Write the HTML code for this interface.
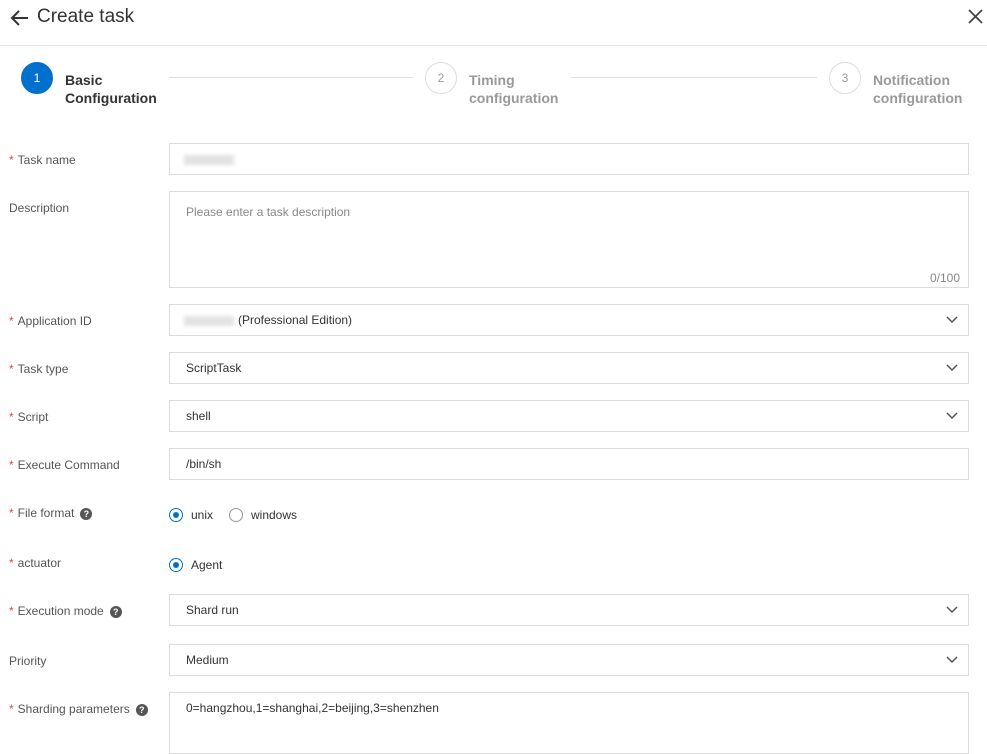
<!DOCTYPE html><html><head><style>
body{margin:0;width:987px;height:735px;overflow:hidden;background:#fff;font-family:"Liberation Sans",sans-serif;position:relative;color:#333}
.a{position:absolute}
.lbl{position:absolute;left:9px;font-size:12px;color:#555}
.lbl b{color:#e54545;font-weight:normal;margin-right:4px}
.in{position:absolute;left:169px;width:798px;height:30px;border:1px solid #dcdcdc;font-size:12px;color:#333;line-height:31px;text-indent:16px}
.chev{position:absolute;right:10px;top:11px}
.q{display:inline-block;width:12px;height:12px;border-radius:50%;background:#555;color:#fff;font-size:9px;font-weight:bold;text-align:center;line-height:12px;vertical-align:middle;margin-left:6px}
.rad{position:absolute;width:14px;height:14px;border-radius:50%;border:1px solid #999;background:#fff;box-sizing:border-box}
.rad.on{border-color:#0070cc}
.rad.on:after{content:"";position:absolute;left:3px;top:3px;width:6px;height:6px;border-radius:50%;background:#0070cc}
.c{position:absolute;width:30px;height:30px;border-radius:50%;border:1px solid #ddd;text-align:center;line-height:30px;font-size:12px;color:#999}
.st{position:absolute;font-size:14px;font-weight:bold;color:#999;line-height:18px}
.blur{display:inline-block;width:50px;height:10px;background:#e2e2e2;filter:blur(2px);vertical-align:middle;margin-left:14px}
</style></head><body>
<svg class="a" style="left:9px;top:9px" width="20" height="18"><path d="M19 9H3M10 2L3 9l7 7" stroke="#333" stroke-width="2" fill="none"/></svg>
<div class="a" style="left:37px;top:6px;font-size:19px;color:#333">Create task</div>
<svg class="a" style="left:968px;top:9px" width="15" height="15"><path d="M1 1l13 13M14 1L1 14" stroke="#444" stroke-width="1.8"/></svg>
<div class="a" style="left:0;top:45px;width:987px;height:1px;background:#e8e8e8"></div>
<div class="c" style="left:21px;top:62px;background:#0070cc;border-color:#0070cc;color:#fff">1</div>
<div class="st" style="left:65px;top:71px;color:#333">Basic<br>Configuration</div>
<div class="a" style="left:169px;top:77px;width:244px;height:1px;background:#ddd"></div>
<div class="c" style="left:425px;top:62px">2</div>
<div class="st" style="left:469px;top:71px">Timing<br>configuration</div>
<div class="a" style="left:571px;top:77px;width:246px;height:1px;background:#ddd"></div>
<div class="c" style="left:829px;top:62px">3</div>
<div class="st" style="left:873px;top:71px">Notification<br>configuration</div>

<div class="lbl" style="top:153px"><b>*</b>Task name</div>
<div class="in" style="top:143px;text-indent:0"><span class="blur"></span></div>
<div class="lbl" style="top:201px">Description</div>
<div class="in" style="top:191px;height:95px;line-height:40px;color:#888">Please enter a task description<div class="a" style="right:8px;bottom:2px;line-height:14px;color:#888">0/100</div></div>
<div class="lbl" style="top:314px"><b>*</b>Application ID</div>
<div class="in" style="top:304px;text-indent:0"><span class="blur" style="width:50px;margin-right:4px"></span>(Professional Edition)<svg class="chev" width="12" height="8"><path d="M1 1l5 5 5-5" stroke="#555" stroke-width="1.5" fill="none"/></svg></div>
<div class="lbl" style="top:362px"><b>*</b>Task type</div>
<div class="in" style="top:352px">ScriptTask<svg class="chev" width="12" height="8"><path d="M1 1l5 5 5-5" stroke="#555" stroke-width="1.5" fill="none"/></svg></div>
<div class="lbl" style="top:410px"><b>*</b>Script</div>
<div class="in" style="top:400px">shell<svg class="chev" width="12" height="8"><path d="M1 1l5 5 5-5" stroke="#555" stroke-width="1.5" fill="none"/></svg></div>
<div class="lbl" style="top:458px"><b>*</b>Execute Command</div>
<div class="in" style="top:448px">/bin/sh</div>
<div class="lbl" style="top:506px"><b>*</b>File format<span class="q">?</span></div>
<div class="rad on" style="left:169px;top:508px"></div><div class="a" style="left:191px;top:508px;font-size:12px">unix</div>
<div class="rad" style="left:229px;top:508px"></div><div class="a" style="left:251px;top:508px;font-size:12px">windows</div>
<div class="lbl" style="top:556px"><b>*</b>actuator</div>
<div class="rad on" style="left:169px;top:558px"></div><div class="a" style="left:191px;top:558px;font-size:12px">Agent</div>
<div class="lbl" style="top:604px"><b>*</b>Execution mode<span class="q">?</span></div>
<div class="in" style="top:594px">Shard run<svg class="chev" width="12" height="8"><path d="M1 1l5 5 5-5" stroke="#555" stroke-width="1.5" fill="none"/></svg></div>
<div class="lbl" style="top:654px">Priority</div>
<div class="in" style="top:644px">Medium<svg class="chev" width="12" height="8"><path d="M1 1l5 5 5-5" stroke="#555" stroke-width="1.5" fill="none"/></svg></div>
<div class="lbl" style="top:702px"><b>*</b>Sharding parameters<span class="q">?</span></div>
<div class="in" style="top:692px;height:60px">0=hangzhou,1=shanghai,2=beijing,3=shenzhen</div>
</body></html>
